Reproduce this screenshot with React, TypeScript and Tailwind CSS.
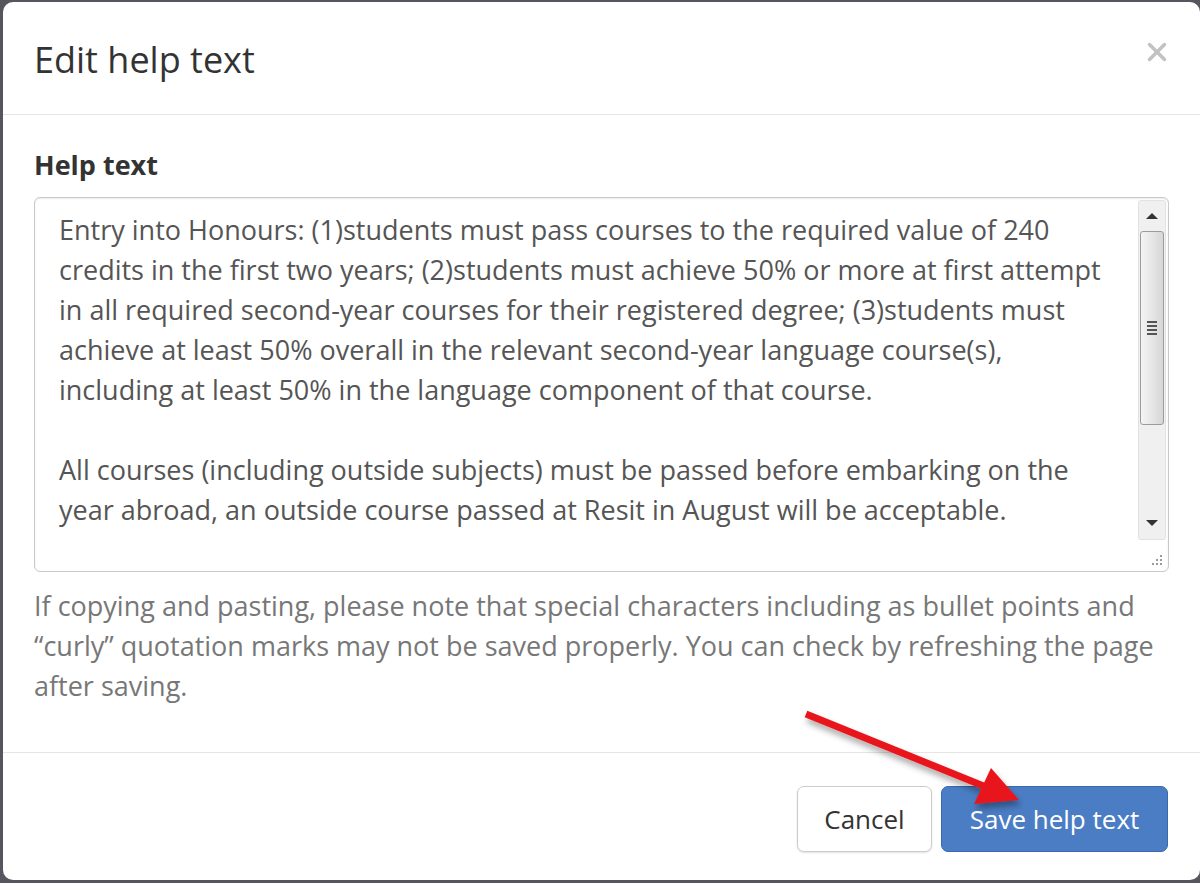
import React from 'react';
import { X } from 'lucide-react';

const entryLines = [
  'Entry into Honours: (1)students must pass courses to the required value of 240',
  'credits in the first two years; (2)students must achieve 50% or more at first attempt',
  'in all required second-year courses for their registered degree; (3)students must',
  'achieve at least 50% overall in the relevant second-year language course(s),',
  'including at least 50% in the language component of that course.',
  '',
  'All courses (including outside subjects) must be passed before embarking on the',
  'year abroad, an outside course passed at Resit in August will be acceptable.',
  '',
];

const helpLines = [
  'If copying and pasting, please note that special characters including as bullet points and',
  '\u201Ccurly\u201D quotation marks may not be saved properly. You can check by refreshing the page',
  'after saving.',
];

function FakeScrollbar() {
  return (
    <div className="w-[28px] mr-[2px] flex flex-col shrink-0">
      <div className="mt-[2px] flex-1 flex flex-col bg-[#f0f0f0] border border-[#e2e2e2] rounded-[3px]">
        {/* up arrow */}
        <div className="h-[30px] flex items-center justify-center">
          <div className="w-0 h-0 border-l-[6px] border-r-[6px] border-b-[6px] border-l-transparent border-r-transparent border-b-[#333]" />
        </div>
        {/* thumb */}
        <div className="h-[194px] mx-[1px] border border-[#9c9c9c] rounded-[3px] bg-gradient-to-r from-[#f4f4f4] via-[#e6e6e6] to-[#d6d6d6] flex flex-col items-center justify-center gap-[2px]">
          <div className="w-[10px] h-[2px] bg-[#555]" />
          <div className="w-[10px] h-[2px] bg-[#555]" />
          <div className="w-[10px] h-[2px] bg-[#555]" />
          <div className="w-[10px] h-[2px] bg-[#555]" />
        </div>
        <div className="flex-1" />
        {/* down arrow */}
        <div className="h-[32px] flex items-center justify-center">
          <div className="w-0 h-0 border-l-[6px] border-r-[6px] border-t-[6px] border-l-transparent border-r-transparent border-t-[#333]" />
        </div>
      </div>
      {/* resize grip */}
      <div className="h-[31px] flex items-end justify-end pr-[3px] pb-[4px]">
        <svg width="14" height="14" viewBox="0 0 14 14">
          <g fill="#9a9a9a">
            <rect x="11" y="2" width="2" height="2" />
            <rect x="7" y="6" width="2" height="2" />
            <rect x="11" y="6" width="2" height="2" />
            <rect x="3" y="10" width="2" height="2" />
            <rect x="7" y="10" width="2" height="2" />
            <rect x="11" y="10" width="2" height="2" />
          </g>
        </svg>
      </div>
    </div>
  );
}

export default function App() {
  return (
    <div className="relative w-[1200px] h-[883px] overflow-hidden bg-[#56565e] pl-[3px] pt-[2px] font-['Open_Sans',sans-serif]">
      <div className="w-[1197px] h-[878px] bg-white rounded-[10px] flex flex-col">
        {/* Header */}
        <div className="h-[113px] border-b border-[#e5e5e5] px-[31px] flex items-start justify-between shrink-0">
          <h4 className="pt-[32px] text-[36px] leading-[51px] text-[#333]">Edit help text</h4>
          <X size={30} strokeWidth={2.8} className="mt-[35px] mr-[-3px] text-[#c2c2c2]" />
        </div>

        {/* Body */}
        <div className="px-[31px] pt-[30px] pb-[46px] shrink-0">
          <label className="block text-[27px] leading-[40px] font-bold text-[#333] mb-[12px]">Help text</label>
          <div className="h-[375px] border border-[#c9c9c9] rounded-[6px] flex overflow-hidden shadow-[inset_0_1px_2px_rgba(0,0,0,0.08)]">
            <div className="flex-1 pl-[24px] pt-[12px] text-[27px] leading-[40px] text-[#555] overflow-hidden">
              {entryLines.map((line, i) => (
                <div key={i} className="whitespace-pre h-[40px]">{line}</div>
              ))}
            </div>
            <FakeScrollbar />
          </div>
          <p className="mt-[14px] text-[27px] leading-[40px] text-[#777]">
            {helpLines.map((line, i) => (
              <span key={i} className="block whitespace-pre">{line}</span>
            ))}
          </p>
        </div>

        {/* Footer */}
        <div className="border-t border-[#e5e5e5] pl-[31px] pr-[32px] pt-[33px] flex justify-end gap-[9px]">
          <button className="w-[135px] h-[66px] bg-white border border-[#ccc] rounded-[7px] text-[26px] text-[#333] shadow-[0_1px_2px_rgba(0,0,0,0.12)]">
            Cancel
          </button>
          <button className="w-[227px] h-[66px] bg-[#4a7dc4] border border-[#3a69ad] rounded-[7px] text-[26px] text-white">
            Save help text
          </button>
        </div>
      </div>

      {/* Annotation arrow */}
      <svg className="absolute inset-0 pointer-events-none" width="1200" height="883" viewBox="0 0 1200 883">
        <defs>
          <filter id="arrowShadow" x="-20%" y="-20%" width="140%" height="160%">
            <feDropShadow dx="2" dy="5" stdDeviation="3" floodColor="#000" floodOpacity="0.35" />
          </filter>
        </defs>
        <g filter="url(#arrowShadow)">
          <line x1="806" y1="714" x2="986" y2="787" stroke="#e8161c" strokeWidth="7" />
          <polygon points="991,768 974,804 1019,800" fill="#e8161c" />
        </g>
      </svg>
    </div>
  );
}
